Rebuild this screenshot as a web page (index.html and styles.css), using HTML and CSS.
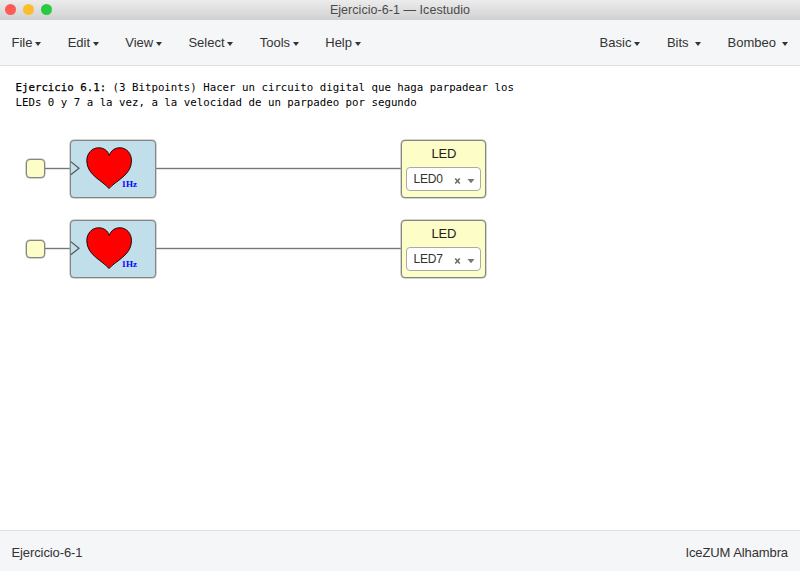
FILE: index.html
```html
<!DOCTYPE html>
<html lang="es">
<head>
<meta charset="utf-8">
<title>Ejercicio-6-1 — Icestudio</title>
<link rel="stylesheet" href="styles.css">
</head>
<body>
<header class="titlebar">
  <div class="lights"><i class="light close"></i><i class="light minimize"></i><i class="light zoom"></i></div>
  <span class="title">Ejercicio-6-1 — Icestudio</span>
</header>
<nav class="menubar">
  <div class="menu-group main-menu">
    <span class="menu">File<i class="caret"></i></span>
    <span class="menu">Edit<i class="caret"></i></span>
    <span class="menu">View<i class="caret"></i></span>
    <span class="menu">Select<i class="caret"></i></span>
    <span class="menu">Tools<i class="caret"></i></span>
    <span class="menu">Help<i class="caret"></i></span>
  </div>
  <div class="menu-group">
    <span class="menu">Basic<i class="caret"></i></span>
    <span class="menu spaced">Bits<i class="caret"></i></span>
    <span class="menu spaced">Bombeo<i class="caret"></i></span>
  </div>
</nav>
<main class="canvas">
  <p class="note"><span class="strong">Ejercicio 6.1:</span> (3 Bitpoints) Hacer un circuito digital que haga parpadear los<br>LEDs 0 y 7 a la vez, a la velocidad de un parpadeo por segundo</p>
  <section class="circuit">
    <div class="port"></div>
    <div class="wire short"></div>
    <div class="block heart">
      <svg width="86" height="58" viewBox="0 0.7 86 58">
        <path class="clock" d="M.8 22.300 L9 29 L.8 35.500"/>
        <path class="shape" d="M39 49.300 C33 41.500 16.800 36 16.800 21.500 C16.800 14 22 8.500 28.500 8.500 C33.500 8.500 37.800 11 39.200 16.200 C41 11 45 8.500 50 8.500 C56.500 8.500 61.500 14 61.500 21.500 C61.500 36 45.500 41.500 39 49.300Z"/>
        <text class="hz" x="51.500" y="47.500">1Hz</text>
      </svg>
    </div>
    <div class="wire long"></div>
    <div class="block led">
      <span class="led-title">LED</span>
      <div class="select"><span>LED0</span>
        <svg width="21" height="8" viewBox="0 0 21 8"><path class="clear" d="M1.200 1.600 L5.800 6.400 M5.800 1.600 L1.200 6.400"/><path class="arrow" d="M13.500 2 H20.500 L17 6.200Z"/></svg>
      </div>
    </div>
  </section>
  <section class="circuit second">
    <div class="port"></div>
    <div class="wire short"></div>
    <div class="block heart">
      <svg width="86" height="58" viewBox="0 0.7 86 58">
        <path class="clock" d="M.8 22.300 L9 29 L.8 35.500"/>
        <path class="shape" d="M39 49.300 C33 41.500 16.800 36 16.800 21.500 C16.800 14 22 8.500 28.500 8.500 C33.500 8.500 37.800 11 39.200 16.200 C41 11 45 8.500 50 8.500 C56.500 8.500 61.500 14 61.500 21.500 C61.500 36 45.500 41.500 39 49.300Z"/>
        <text class="hz" x="51.500" y="47.500">1Hz</text>
      </svg>
    </div>
    <div class="wire long"></div>
    <div class="block led">
      <span class="led-title">LED</span>
      <div class="select"><span>LED7</span>
        <svg width="21" height="8" viewBox="0 0 21 8"><path class="clear" d="M1.200 1.600 L5.800 6.400 M5.800 1.600 L1.200 6.400"/><path class="arrow" d="M13.500 2 H20.500 L17 6.200Z"/></svg>
      </div>
    </div>
  </section>
</main>
<footer class="statusbar"><span>Ejercicio-6-1</span><span>IceZUM Alhambra</span></footer>
</body>
</html>
```
FILE: styles.css
```css
* { box-sizing: border-box; }
body {
  margin: 0;
  height: 571px;
  display: flex;
  flex-direction: column;
  overflow: hidden;
  background: #fff;
  color: #333;
  font: 13px/20px "Liberation Sans", Arial, sans-serif;
}
.titlebar {
  height: 20px;
  flex: none;
  display: grid;
  grid-template-columns: 60px 1fr 60px;
  background: linear-gradient(#ececec, #d2d2d2);
  border-bottom: 1px solid #d0d0d0;
}
.lights { display: flex; gap: 7px; padding: 4px 0 0 5px; }
.light { width: 11px; height: 11px; border-radius: 50%; flex: none; }
.close { background: #fc5b57; }
.minimize { background: #fdbd2f; }
.zoom { background: #27ca40; }
.title { text-align: center; font-size: 12.5px; letter-spacing: .05px; color: #4a4a4a; }
.menubar {
  height: 46px;
  flex: none;
  display: flex;
  justify-content: space-between;
  align-items: center;
  padding: 0 12px 0 11.5px;
  background: #f5f6f8;
  border-bottom: 1px solid #dfe0e2;
}
.menu-group { display: flex; gap: 27px; }
.main-menu { gap: 26.7px; }
.menu { display: flex; align-items: center; white-space: nowrap; padding-top: 1px; }
.caret {
  margin: 1px 0 0 2.5px;
  border: 3.5px solid transparent;
  border-top: 4px solid #333;
  border-bottom: 0;
}
.spaced .caret { margin-left: 6px; }
.canvas { flex: 1; padding: 14px 15.5px; }
.note {
  margin: 0;
  height: 59.5px;
  color: #000;
  font: 10.75px/15px "DejaVu Sans Mono", monospace;
  white-space: nowrap;
}
.strong { -webkit-text-stroke: .25px #000; }
.circuit { display: flex; align-items: center; height: 58px; padding-left: 10.5px; }
.second { margin-top: 22.3px; }
.port, .block { flex: none; border: 1px solid #858585; border-radius: 4px; box-shadow: 0 0 0 .5px #aaa; }
.port { width: 18.500px; height: 18.500px; background: #fdfdc8; }
.wire { flex: none; height: 1px; background: #777; box-shadow: 0 0 0 .3px #aaa; }
.short { width: 25.500px; }
.long { width: 245px; }
.block { width: 85.5px; height: 58px; }
.heart { background: #c0dfeb; }
.heart svg { display: block; margin: -1px; }
.clock { fill: none; stroke: #555; stroke-width: 1.2; }
.shape { fill: red; stroke: #111; stroke-width: 1; }
.hz { fill: #00f; font: bold 9px "Liberation Serif", serif; }
.led { background: #fdfdc8; padding: 3px 4.5px; }
.led-title { display: block; height: 23.5px; text-align: center; line-height: 20px; padding-left: 1px; letter-spacing: -.2px; color: #222; }
.select {
  height: 24px;
  display: flex;
  align-items: center;
  justify-content: space-between;
  padding: 0 5px 0 6.5px;
  border: 1px solid #aaa;
  border-radius: 4px;
  background: #fff;
  font-size: 12px;
  letter-spacing: -.2px;
}
.select svg { margin-top: 3px; }
.clear { stroke: #666; stroke-width: 1.500; }
.arrow { fill: #777; }
.statusbar {
  height: 41px;
  flex: none;
  display: flex;
  justify-content: space-between;
  align-items: center;
  padding: 4px 12px 0 11.5px;
  background: #f5f6f8;
  border-top: 1px solid #dfe0e2;
  letter-spacing: -.1px;
}
```
